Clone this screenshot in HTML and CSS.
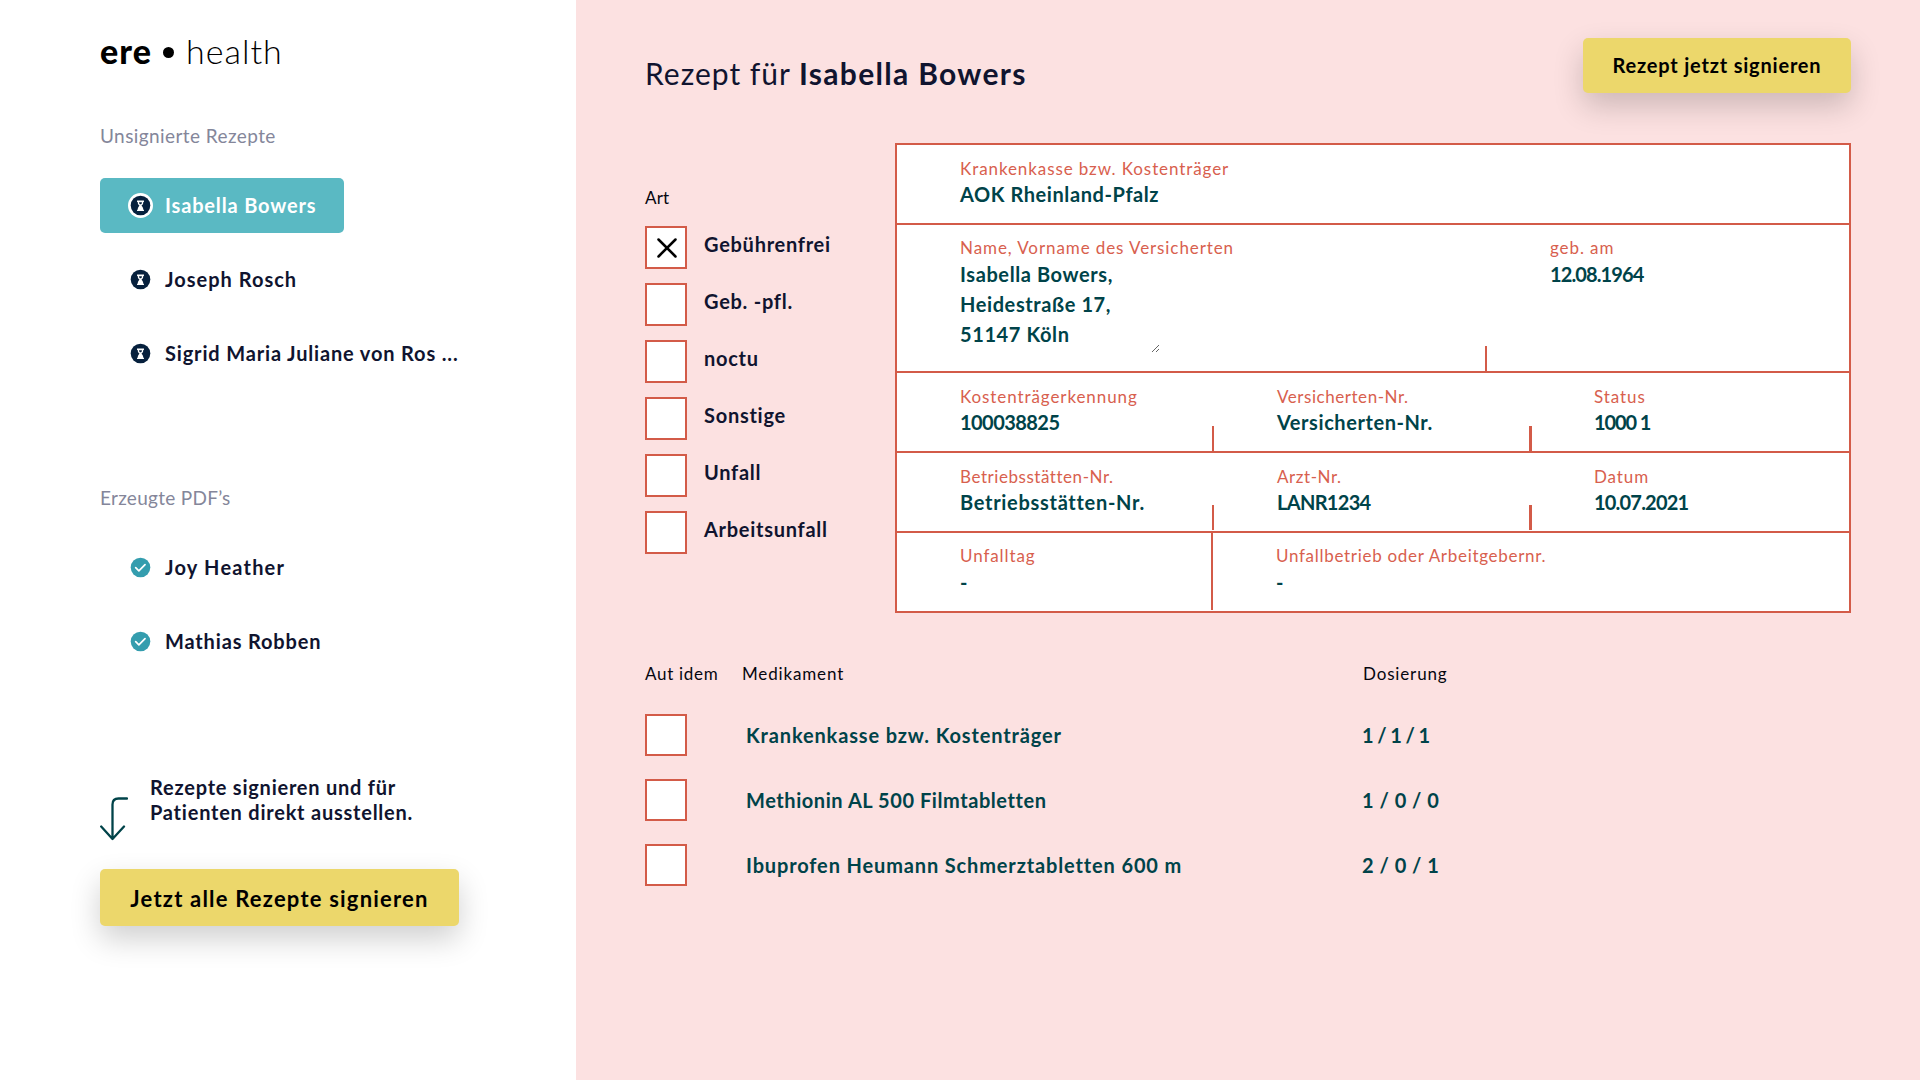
FILE: index.html
```html
<!DOCTYPE html>
<html lang="de">
<head>
<meta charset="utf-8">
<title>ere health – Rezepte</title>
<link rel="stylesheet" href="styles.css">
</head>
<body>
<svg class="sprite" aria-hidden="true">
  <symbol id="hourglass" viewBox="0 0 26 26">
    <circle cx="13" cy="13" r="10.2" fill="#06203d"/>
    <path d="M9.400 7.800h7.200v1.500h-.7c0 1.900-.7 2.800-1.900 3.900c1.200 1.100 1.900 2.300 1.900 4.200h.7v1.200H9.400v-1.200h.7c0-1.900.7-3.100 1.900-4.200c-1.200-1.100-1.900-2-1.900-3.900h-.7z" fill="#fff"/>
    <path d="M11.500 9.500h3c0 .9-.3 1.600-.9 2.200h-1.200c-.6-.6-.9-1.300-.9-2.200z" fill="#06203d"/>
  </symbol>
  <symbol id="done" viewBox="0 0 26 26">
    <circle cx="13" cy="13" r="10.200" fill="#349dae"/>
    <path d="M8 13.200l3.300 3.200l6.400-6.400" fill="none" stroke="#fff" stroke-width="1.800" stroke-linecap="round" stroke-linejoin="round"/>
  </symbol>
</svg>
<div class="app">
  <aside class="sidebar">
    <div class="logo"><span class="logo-ere">ere</span><span class="logo-dot"></span><span class="logo-health">health</span></div>
    <h2 class="group-title">Unsignierte Rezepte</h2>
    <ul class="people">
      <li class="person active"><svg class="status"><use href="#hourglass"/></svg><span>Isabella Bowers</span></li>
      <li class="person"><svg class="status"><use href="#hourglass"/></svg><span class="wide">Joseph Rosch</span></li>
      <li class="person"><svg class="status"><use href="#hourglass"/></svg><span>Sigrid Maria Juliane von Ros ...</span></li>
    </ul>
    <h2 class="group-title pdfs">Erzeugte PDF’s</h2>
    <ul class="people">
      <li class="person"><svg class="status"><use href="#done"/></svg><span class="wider">Joy Heather</span></li>
      <li class="person"><svg class="status"><use href="#done"/></svg><span>Mathias Robben</span></li>
    </ul>
    <div class="hint">
      <svg class="hint-arrow" viewBox="0 0 28 44" fill="none" stroke="#004349" stroke-width="2.300" stroke-linecap="round" stroke-linejoin="round"><path d="M27 1.500h-8.500q-6 0-6 6V42M1.200 29.500L12.500 42L24 29.500"/></svg>
      <p class="hint-text">Rezepte signieren und für<br>Patienten direkt ausstellen.</p>
    </div>
    <button class="button sign-all">Jetzt alle Rezepte signieren</button>
  </aside>

  <main class="main">
    <header class="header">
      <h1 class="title">Rezept für <b>Isabella Bowers</b></h1>
      <button class="button sign-one">Rezept jetzt signieren</button>
    </header>

    <div class="prescription">
      <section class="kinds">
        <div class="caption kinds-caption">Art</div>
        <div class="kind"><span class="box box-checked"><svg viewBox="0 0 20 20" width="20" height="20" stroke="#000" stroke-width="2.500" stroke-linecap="round"><path d="M1.500 1.500l17 17M18.500 1.500l-17 17"/></svg></span><span class="kind-name">Gebührenfrei</span></div>
        <div class="kind"><span class="box"></span><span class="kind-name">Geb. -pfl.</span></div>
        <div class="kind"><span class="box"></span><span class="kind-name">noctu</span></div>
        <div class="kind"><span class="box"></span><span class="kind-name">Sonstige</span></div>
        <div class="kind"><span class="box"></span><span class="kind-name">Unfall</span></div>
        <div class="kind"><span class="box"></span><span class="kind-name">Arbeitsunfall</span></div>
      </section>

      <section class="form">
        <div class="row">
          <div class="cell"><div class="label">Krankenkasse bzw. Kostenträger</div><div class="value snug">AOK Rheinland-Pfalz</div></div>
        </div>
        <div class="row row-insured">
          <div class="cell tick"><div class="label">Name, Vorname des Versicherten</div><textarea class="value address" spellcheck="false">Isabella Bowers,
Heidestraße 17,
51147 Köln</textarea></div>
          <div class="cell"><div class="label">geb. am</div><div class="value number born">12.08.1964</div></div>
        </div>
        <div class="row row-thirds">
          <div class="cell tick"><div class="label">Kostenträgerkennung</div><div class="value number insurer">100038825</div></div>
          <div class="cell tick tick-thick"><div class="label tight">Versicherten-Nr.</div><div class="value snug">Versicherten-Nr.</div></div>
          <div class="cell"><div class="label">Status</div><div class="value number status-no">1000 1</div></div>
        </div>
        <div class="row row-thirds row-raised">
          <div class="cell tick"><div class="label tight">Betriebsstätten-Nr.</div><div class="value site">Betriebsstätten-Nr.</div></div>
          <div class="cell tick tick-thick"><div class="label tight">Arzt-Nr.</div><div class="value number">LANR1234</div></div>
          <div class="cell"><div class="label">Datum</div><div class="value number date">10.07.2021</div></div>
        </div>
        <div class="row row-accident">
          <div class="cell divided"><div class="label">Unfalltag</div><div class="value">-</div></div>
          <div class="cell"><div class="label workplace">Unfallbetrieb oder Arbeitgebernr.</div><div class="value">-</div></div>
        </div>
      </section>
    </div>

    <section class="meds">
      <div class="med med-head caption"><span class="autidem">Aut idem</span><span>Medikament</span><span>Dosierung</span></div>
      <div class="med"><span class="box box-low"></span><span class="med-name">Krankenkasse bzw. Kostenträger</span><span class="dose dose-narrow">1 / 1 / 1</span></div>
      <div class="med"><span class="box box-low"></span><span class="med-name med-snug">Methionin AL 500 Filmtabletten</span><span class="dose">1 / 0 / 0</span></div>
      <div class="med"><span class="box box-low"></span><span class="med-name">Ibuprofen Heumann Schmerztabletten 600 m</span><span class="dose">2 / 0 / 1</span></div>
    </section>
  </main>
</div>
</body>
</html>
```
FILE: styles.css
```css
* { box-sizing: border-box; margin: 0; padding: 0; }
body { font-family: Lato, sans-serif; font-size: 20px; color: #10142f; background: #fff; }
.sprite { display: none; }
.app { display: flex; width: 1920px; height: 1080px; overflow: hidden; }

/* Sidebar */
.sidebar { flex: none; width: 576px; padding: 30px 0 0 100px; }
.logo { display: flex; align-items: center; height: 41px; line-height: 40px; font-size: 34px; color: #000; }
.logo-ere { width: 63px; font-weight: 900; letter-spacing: 1px; }
.logo-dot { width: 11px; height: 11px; margin: 4px 12px 0 0; border-radius: 50%; background: #000; }
.logo-health { font-weight: 300; letter-spacing: 1px; }
.group-title { margin: 53px 0 30px; font-size: 19px; line-height: 24px; font-weight: 400; letter-spacing: .42px; color: #84869a; }
.pdfs { margin-top: 105px; letter-spacing: .28px; }
.people { display: flex; flex-direction: column; align-items: flex-start; gap: 19px; list-style: none; }
.person { display: flex; align-items: center; gap: 12px; height: 55px; padding: 0 26px 0 28px; border-radius: 5px; font-weight: 700; letter-spacing: .84px; white-space: nowrap; }
.person span { padding-bottom: 1px; }
.person.active { width: 244px; background: #5ab9c3; color: #fff; }
.status { flex: none; width: 25px; height: 25px; border-radius: 50%; }
.active .status { background: #fff; }
.person .wide { letter-spacing: 1px; }
.person .wider { letter-spacing: 1.2px; }
.hint { display: flex; gap: 22px; height: 66px; margin-top: 106px; }
.hint-arrow { flex: none; width: 28px; height: 44px; margin-top: 22px; }
.hint-text { line-height: 25px; font-weight: 700; letter-spacing: .77px; }

.button { display: block; border: 0; border-radius: 5px; background: #ecd76b; color: #000; font-family: inherit; font-weight: 700; white-space: nowrap; box-shadow: 0 13px 30px rgba(0, 0, 0, .19); }
.sign-all { width: 359px; height: 57px; margin-top: 28px; padding-top: 1px; font-size: 22px; letter-spacing: 1.2px; }
.sign-one { width: 268px; height: 55px; padding-bottom: 1px; font-size: 20px; letter-spacing: .8px; }

/* Prescription */
.main { flex: 1; padding: 38px 69px 0; background: #fce1e1; }
.header { display: flex; justify-content: space-between; height: 55px; margin-bottom: 50px; }
.title { padding-top: 15px; font-size: 30px; line-height: 40px; font-weight: 400; letter-spacing: 1px; }
.title b { letter-spacing: 1.3px; }
.caption { font-size: 17px; line-height: 24px; letter-spacing: .85px; color: #05060f; }
.prescription { display: flex; }
.kinds { display: flex; flex-direction: column; gap: 14px; width: 250px; padding-top: 43px; }
.kinds-caption { margin-bottom: 2px; letter-spacing: .15px; }
.kind { display: flex; align-items: center; gap: 17px; height: 43px; }
.kind-name { padding-bottom: 7px; font-weight: 700; letter-spacing: .73px; }
.box { display: flex; align-items: center; justify-content: center; width: 42px; height: 43px; border: 2px solid #d35b48; background: #fff; }
.box-checked { padding-left: 2px; }
.box-low { height: 42px; }

.form { flex: 1; border: 2px solid #d35b48; background: #fff; }
.row { display: grid; height: 80px; border-bottom: 2px solid #d35b48; }
.row:last-child { height: 78px; border-bottom: 0; }
.row-insured { height: 148px; grid-template-columns: 590px 1fr; }
.row-thirds { grid-template-columns: 317px 318px 317px; }
.row-accident { grid-template-columns: 316px 1fr; }
.cell { position: relative; padding: 12px 0 0 63px; }
.row-insured .cell, .row-accident .cell { padding-top: 11px; }
.row-thirds .cell:last-child { padding-left: 62px; }
.tick::after { content: ""; position: absolute; right: 0; bottom: 0; width: 2px; height: 25px; background: #d35b48; }
.tick-thick::after { width: 3px; }
.row-raised .tick::after { bottom: 1px; }
.divided { height: 77px; border-right: 2px solid #d35b48; }
.label { font-size: 17px; line-height: 24px; letter-spacing: .91px; color: #d8604e; }
.tight { letter-spacing: .55px; }
.workplace { letter-spacing: .7px; }
.value { line-height: 26px; font-weight: 700; letter-spacing: .75px; color: #004349; }
.row-accident .value { line-height: 28px; }
.snug { letter-spacing: .57px; }
.site { letter-spacing: .7px; }
.number { letter-spacing: -.68px; }
.insurer { letter-spacing: -.55px; }
.date { letter-spacing: -.8px; }
.row-insured .born { line-height: 28px; letter-spacing: -.88px; }
.status-no { letter-spacing: -1.1px; }
.address { display: block; width: 200px; height: 94px; margin-top: -1px; border: 0; background: none; font-family: inherit; font-size: 20px; line-height: 30px; letter-spacing: .6px; overflow: hidden; }

/* Medication */
.meds { display: flex; flex-direction: column; gap: 23px; padding-top: 49px; }
.med { display: grid; grid-template-columns: 101px 616px 1fr; align-items: center; height: 42px; font-weight: 700; color: #004349; }
.med-head { grid-template-columns: 97px 621px 1fr; height: 24px; margin-bottom: 5px; font-weight: 400; color: #05060f; }
.autidem { letter-spacing: .7px; }
.med-name { padding-bottom: 1px; letter-spacing: .86px; }
.med-snug { letter-spacing: .56px; }
.dose { padding-bottom: 1px; letter-spacing: .5px; }
.dose-narrow { letter-spacing: -.6px; }
```
